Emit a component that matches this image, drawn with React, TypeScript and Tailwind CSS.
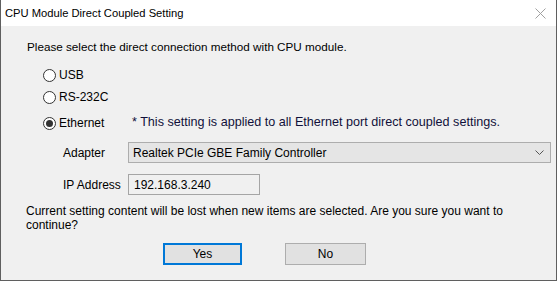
import React from "react";

function Radio({ checked }: { checked?: boolean }) {
  return (
    <span className="w-[13px] h-[13px] rounded-full border border-[#333333] bg-white flex items-center justify-center shrink-0">
      {checked && <span className="w-[7px] h-[7px] rounded-full bg-[#333333]" />}
    </span>
  );
}

export default function App() {
  return (
    <div
      className="w-[557px] h-[281px] flex flex-col bg-[#f0f0f0] border-l border-r border-b border-[#5f5f5f] text-[12px] text-black overflow-hidden"
      style={{ fontFamily: '"Liberation Sans", Arial, sans-serif' }}
    >
      <div className="h-[26px] bg-white flex items-center justify-between pl-[4px] pr-[9px] shrink-0">
        <span className="text-[11.2px] leading-[14px]">CPU Module Direct Coupled Setting</span>
        <svg width="11" height="11" viewBox="0 0 11 11" className="mr-[1px]">
          <path d="M0.5 0.5 L10.5 10.5 M10.5 0.5 L0.5 10.5" stroke="#a0a0a0" strokeWidth="1" fill="none" />
        </svg>
      </div>
      <div className="flex flex-col pl-[25px]">
        <div className="mt-[13px] leading-[15px] pl-[1px] text-[11.7px]">Please select the direct connection method with CPU module.</div>
        <div className="mt-[14px] ml-[17px] flex items-center gap-[3px] h-[15px] leading-[15px]">
          <Radio />
          <span>USB</span>
        </div>
        <div className="mt-[7px] ml-[17px] flex items-center gap-[3px] h-[15px] leading-[15px]">
          <Radio />
          <span>RS-232C</span>
        </div>
        <div className="mt-[11px] ml-[17px] flex items-center h-[15px] leading-[15px]">
          <Radio checked />
          <span className="ml-[3px] w-[73px]">Ethernet</span>
          <span className="text-[#10103a] -mt-[3px] text-[12.6px]">* This setting is applied to all Ethernet port direct coupled settings.</span>
        </div>
        <div className="mt-[11px] flex items-center h-[21px]">
          <span className="ml-[37px] w-[65px]">Adapter</span>
          <div className="w-[423px] h-[21px] bg-[#e5e5e5] border border-[#adadad] flex items-center justify-between pl-[4px] pr-[6px]">
            <span>Realtek PCIe GBE Family Controller</span>
            <svg width="9" height="6" viewBox="0 0 9 6">
              <path d="M0.5 0.5 L4.5 4.5 L8.5 0.5" stroke="#555555" strokeWidth="1" fill="none" />
            </svg>
          </div>
        </div>
        <div className="mt-[11px] flex items-center h-[21px]">
          <span className="ml-[37px] w-[65px]">IP Address</span>
          <div className="w-[132px] h-[21px] bg-[#f0f0f0] border border-[#a5a5a5] flex items-center pl-[5px]">
            <span>192.168.3.240</span>
          </div>
        </div>
        <div className="mt-[9px] leading-[14px]">
          Current setting content will be lost when new items are selected. Are you sure you want to
          <br />
          continue?
        </div>
        <div className="mt-[11px] flex">
          <button className="ml-[137px] w-[79px] h-[22px] bg-[#e1e1e1] border-2 border-[#0078d7] flex items-center justify-center">
            Yes
          </button>
          <button className="ml-[43px] w-[81px] h-[22px] bg-[#e1e1e1] border border-[#adadad] flex items-center justify-center">
            No
          </button>
        </div>
      </div>
    </div>
  );
}
